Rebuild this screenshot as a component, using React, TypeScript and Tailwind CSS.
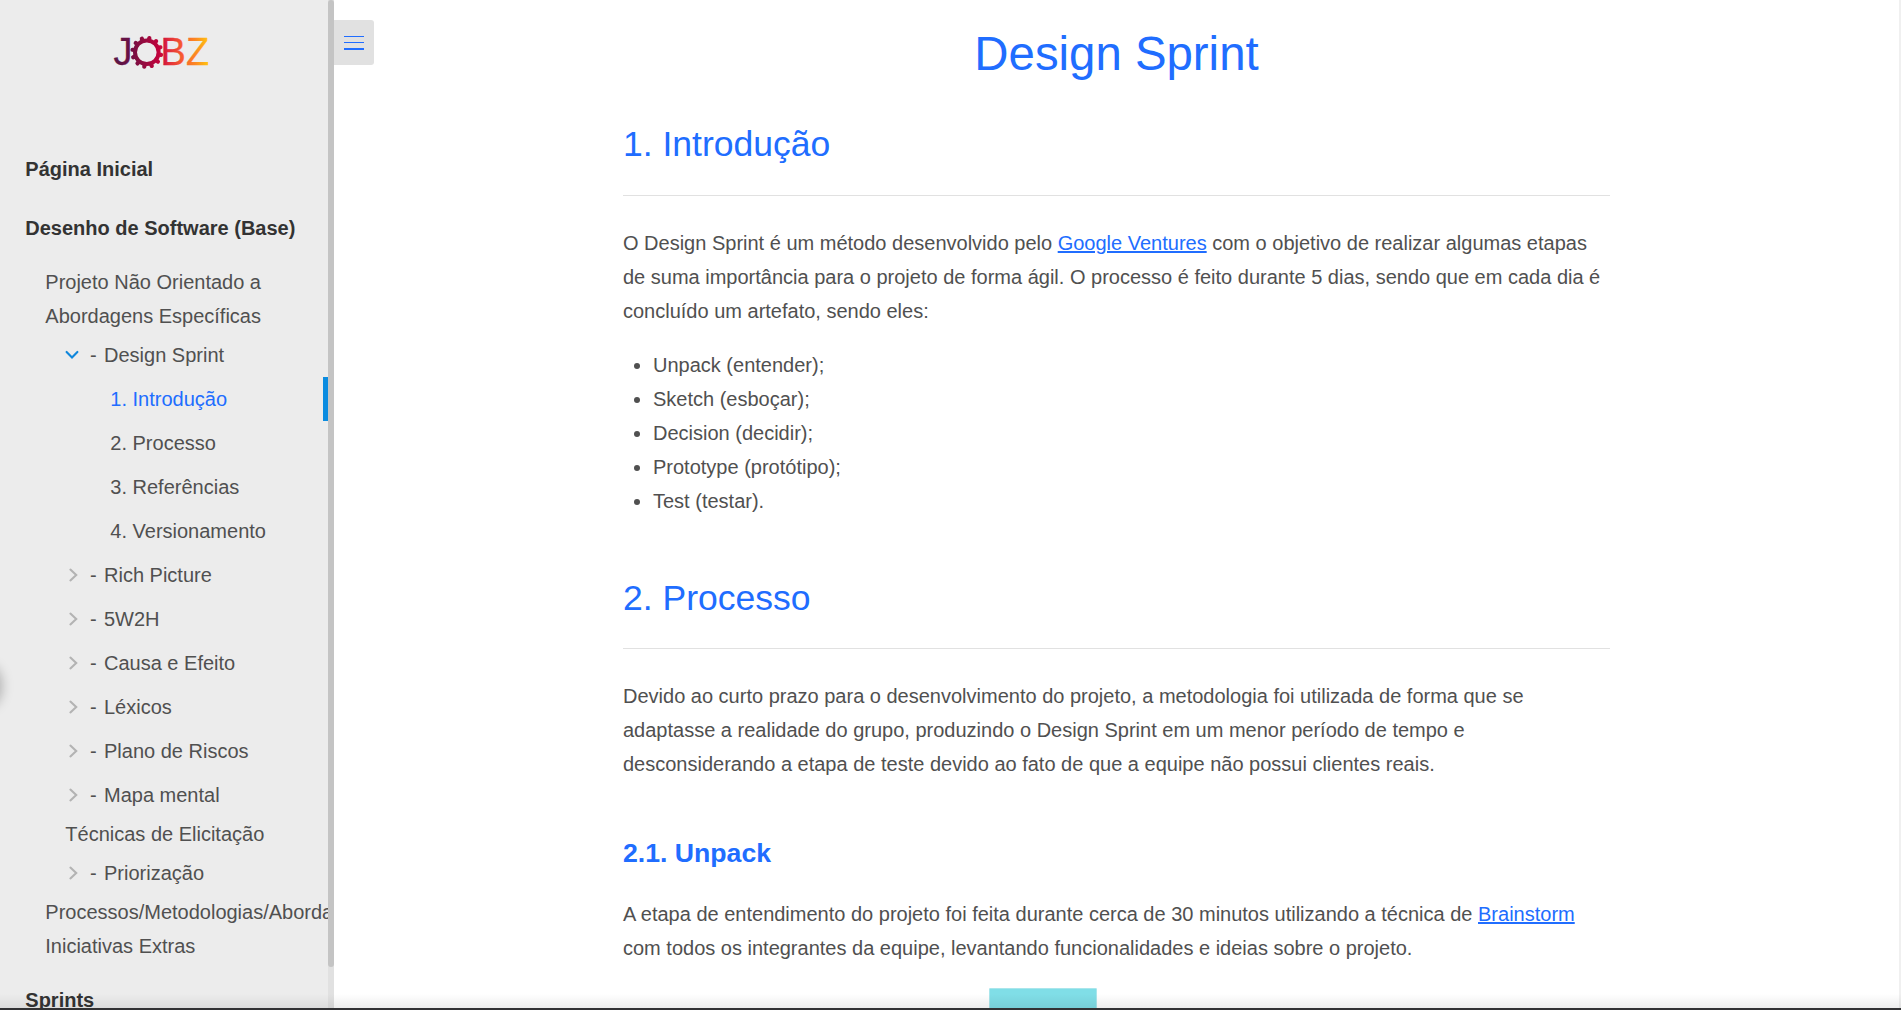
import React from "react";

function Logo() {
  const teeth = Array.from({ length: 12 }, (_, i) => i * 30 + 10);
  return (
    <svg width="100" height="40" viewBox="110 32 100 40" className="ml-[110px] block" aria-label="JOBZ">
      <defs>
        <linearGradient id="brand" gradientUnits="userSpaceOnUse" x1="114" y1="0" x2="208" y2="0">
          <stop offset="0" stopColor="#581845" />
          <stop offset="0.16" stopColor="#6a1045" />
          <stop offset="0.3" stopColor="#900c3f" />
          <stop offset="0.48" stopColor="#c2023c" />
          <stop offset="0.58" stopColor="#e02c3b" />
          <stop offset="0.74" stopColor="#f9602f" />
          <stop offset="0.87" stopColor="#fc8a22" />
          <stop offset="1" stopColor="#ffc30f" />
        </linearGradient>
      </defs>
      <g fill="url(#brand)" stroke="url(#brand)" strokeWidth="0.3" fontFamily="Liberation Sans, sans-serif" fontSize="38">
        <text x="113.4" y="65.3">J</text>
        <text x="160.4" y="65.3">B</text>
        <text x="185.9" y="65.3">Z</text>
      </g>
      <circle cx="146.8" cy="52.3" r="11.8" fill="none" stroke="url(#brand)" strokeWidth="4" />
      <g stroke="url(#brand)" strokeWidth="4.2" strokeLinecap="round">
        {teeth.map((a) => {
          const r = (a * Math.PI) / 180;
          const c = Math.cos(r);
          const s = Math.sin(r);
          return (
            <line key={a} x1={146.8 + 12.4 * c} y1={52.3 + 12.4 * s} x2={146.8 + 14.5 * c} y2={52.3 + 14.5 * s} />
          );
        })}
      </g>
    </svg>
  );
}

function Chevron({ open }: { open?: boolean }) {
  return open ? (
    <svg width="14" height="10" viewBox="0 0 14 10" className="ml-[65px] mr-[11px] shrink-0" fill="none" stroke="#0f87dc" strokeWidth="2.1" strokeLinecap="round">
      <path d="M1.6 1.9 7 7.5l5.4-5.6" />
    </svg>
  ) : (
    <svg width="10" height="14" viewBox="0 0 10 14" className="ml-[68px] mr-3 shrink-0" fill="none" stroke="#b3b3b3" strokeWidth="2.1" strokeLinecap="round">
      <path d="M2.4 1.6 8.2 7l-5.8 5.4" />
    </svg>
  );
}

function Page({ label, open }: { label: string; open?: boolean }) {
  return (
    <div className="flex h-11 items-center">
      <Chevron open={open} />
      <span className="w-3.5">-</span>
      <span>{label}</span>
    </div>
  );
}

function Section({ label, active }: { label: string; active?: boolean }) {
  return active ? (
    <div className="flex h-11 items-center border-r-[5px] border-[#0b8ce0] pl-[110.3px] text-[#206dff]">{label}</div>
  ) : (
    <div className="flex h-11 items-center pl-[110.3px]">{label}</div>
  );
}

function Sidebar() {
  return (
    <aside className="flex h-full w-[334px] shrink-0 bg-[#ececec]">
      <nav className="w-[328px] overflow-hidden pt-8">
        <Logo />
        <div className="mt-20 pl-[25.3px] font-bold text-[#333]">Página Inicial</div>
        <div className="mt-[25px] pl-[25.3px] font-bold text-[#333]">Desenho de Software (Base)</div>
        <div className="mt-5 pl-[45.3px]">
          Projeto Não Orientado a<br />
          Abordagens Específicas
        </div>
        <Page label="Design Sprint" open />
        <Section label="1. Introdução" active />
        <Section label="2. Processo" />
        <Section label="3. Referências" />
        <Section label="4. Versionamento" />
        <Page label="Rich Picture" />
        <Page label="5W2H" />
        <Page label="Causa e Efeito" />
        <Page label="Léxicos" />
        <Page label="Plano de Riscos" />
        <Page label="Mapa mental" />
        <div className="pl-[65.3px]">Técnicas de Elicitação</div>
        <Page label="Priorização" />
        <div className="whitespace-nowrap pl-[45.3px]">
          Processos/Metodologias/Abordagens
          <br />
          Iniciativas Extras
        </div>
        <div className="mt-5 pl-[25.3px] font-bold text-[#333]">Sprints</div>
      </nav>
      <div className="w-1.5 bg-[#e1e1e1]">
        <div className="h-[967px] rounded-[3px] bg-[#c4c4c4]" />
      </div>
    </aside>
  );
}

export default function App() {
  return (
    <div className="relative flex h-[1010px] w-[1901px] overflow-hidden bg-white font-['Liberation_Sans',Arial,sans-serif] text-[20px] leading-[34px] text-[#505050]">
      <Sidebar />
      <button className="mt-5 flex h-[45px] w-10 shrink-0 flex-col items-center rounded-r-[3px] bg-[#e1e1e1] pt-4" aria-label="Menu">
        <span className="h-px w-5 bg-[#206dff]" />
        <span className="mt-[5px] h-px w-5 bg-[#206dff]" />
        <span className="mt-[5px] h-0.5 w-5 bg-[#206dff]" />
      </button>
      <main className="ml-[249px] w-[987px] shrink-0">
        <h1 className="mt-[25px] text-center text-[47.37px] leading-[58px] text-[#206dff]">Design Sprint</h1>
        <h2 className="mt-[39px] h-[74px] border-b border-[#e1e1e1] text-[35.53px] leading-[44px] text-[#206dff]">1. Introdução</h2>
        <p className="mt-[30px]">
          O Design Sprint é um método desenvolvido pelo <a className="text-[#206dff] underline">Google Ventures</a> com o objetivo de realizar algumas etapas de suma importância para o projeto de forma ágil. O processo é feito durante 5 dias, sendo que em cada dia é concluído um artefato, sendo eles:
        </p>
        <ul className="mt-5 list-disc pl-[30px]">
          <li>Unpack (entender);</li>
          <li>Sketch (esboçar);</li>
          <li>Decision (decidir);</li>
          <li>Prototype (protótipo);</li>
          <li>Test (testar).</li>
        </ul>
        <h2 className="mt-[58px] h-[73px] border-b border-[#e1e1e1] text-[35.53px] leading-[44px] text-[#206dff]">2. Processo</h2>
        <p className="mt-[30px]">
          Devido ao curto prazo para o desenvolvimento do projeto, a metodologia foi utilizada de forma que se adaptasse a realidade do grupo, produzindo o Design Sprint em um menor período de tempo e desconsiderando a etapa de teste devido ao fato de que a equipe não possui clientes reais.
        </p>
        <h3 className="mt-[56px] text-[26.65px] font-bold leading-[32px] text-[#206dff]">2.1. Unpack</h3>
        <p className="mt-[28px]">
          A etapa de entendimento do projeto foi feita durante cerca de 30 minutos utilizando a técnica de <a className="text-[#206dff] underline">Brainstorm</a> com todos os integrantes da equipe, levantando funcionalidades e ideias sobre o projeto.
        </p>
        <div className="ml-[366px] mt-[23px] h-10 w-[108px] rounded-[1px] border border-[#a9e6ec] bg-[#80dee7]" />
      </main>
      <div className="ml-auto w-0.5 bg-[#f0f0f0]" />
      <div className="absolute -left-10 top-[664px] h-[44px] w-10 rounded-full shadow-[0_0_12px_2px_rgba(0,0,0,0.25)]" />
      <div className="absolute bottom-0.5 left-0 h-3.5 w-full bg-gradient-to-b from-transparent to-black/7" />
      <div className="absolute bottom-0 left-0 h-0.5 w-full bg-[#323234]" />
    </div>
  );
}
